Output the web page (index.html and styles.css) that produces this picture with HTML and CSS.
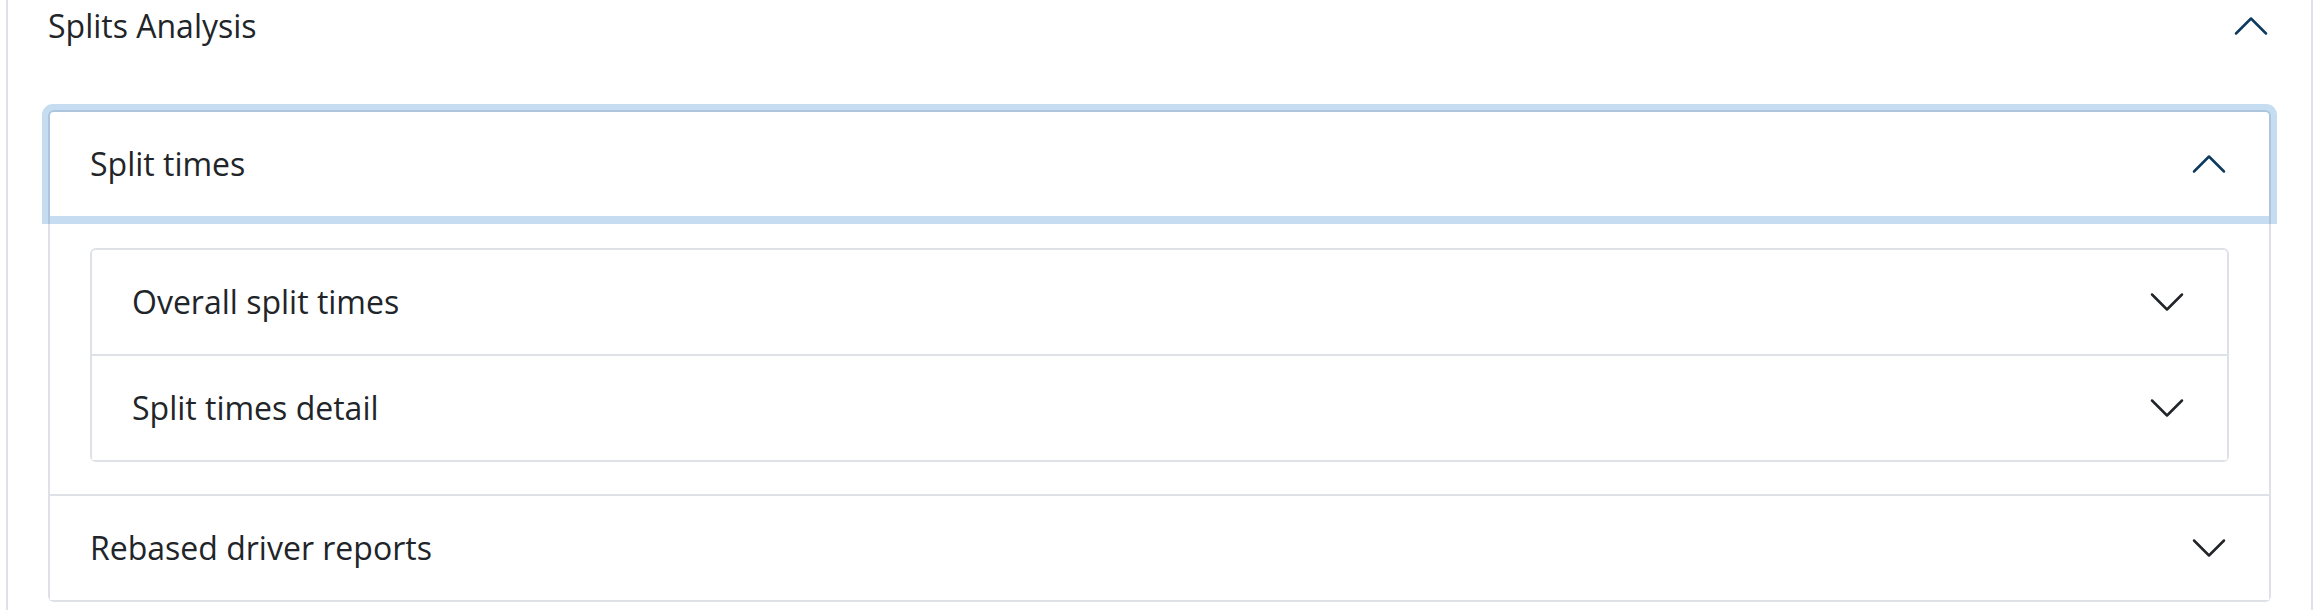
FILE: index.html
```html
<!DOCTYPE html>
<html lang="en">
<head>
<meta charset="utf-8">
<title>Splits Analysis</title>
<link rel="stylesheet" href="styles.css">
</head>
<body>
<div class="card">
  <div class="card-head">
    <span class="title">Splits Analysis</span>
    <svg class="chev chev-up" viewBox="0 0 16 16" aria-hidden="true"><path d="M2 11L8 5L14 11"/></svg>
  </div>
  <div class="card-body">
    <div class="acc">
      <div class="item">
        <button class="head is-open is-focus" type="button">
          <span class="title">Split times</span>
          <svg class="chev chev-up" viewBox="0 0 16 16" aria-hidden="true"><path d="M2 11L8 5L14 11"/></svg>
        </button>
        <div class="item-body">
          <div class="acc">
            <div class="item">
              <button class="head" type="button">
                <span class="title">Overall split times</span>
                <svg class="chev" viewBox="0 0 16 16" aria-hidden="true"><path d="M2 5L8 11L14 5"/></svg>
              </button>
            </div>
            <div class="item">
              <button class="head" type="button">
                <span class="title">Split times detail</span>
                <svg class="chev" viewBox="0 0 16 16" aria-hidden="true"><path d="M2 5L8 11L14 5"/></svg>
              </button>
            </div>
          </div>
        </div>
      </div>
      <div class="item">
        <button class="head" type="button">
          <span class="title">Rebased driver reports</span>
          <svg class="chev" viewBox="0 0 16 16" aria-hidden="true"><path d="M2 5L8 11L14 5"/></svg>
        </button>
      </div>
    </div>
  </div>
</div>
</body>
</html>
```
FILE: styles.css
```css
html, body {
  margin: 0;
  padding: 0;
  background: #ffffff;
}

body {
  font-family: "Open Sans", "Noto Sans", "Liberation Sans", sans-serif;
  font-size: 32px;
  line-height: 40px;
  color: #212529;
  overflow: hidden;
}

.card {
  margin: -28px 3px 0 6px;
  border: 2px solid #dee2e6;
  border-radius: 12px;
  background: #ffffff;
}

.card-head {
  display: flex;
  align-items: center;
  height: 104px;
  padding: 0 40px;
  box-sizing: border-box;
}

.card-body {
  padding: 32px 40px;
}

.acc {
  display: flex;
  flex-direction: column;
}

.item {
  border: 2px solid #dee2e6;
  background: #ffffff;
}

.item + .item {
  border-top: 0;
}

.item:first-child {
  border-top-left-radius: 6px;
  border-top-right-radius: 6px;
}

.item:last-child {
  border-bottom-left-radius: 6px;
  border-bottom-right-radius: 6px;
}

.head {
  display: flex;
  align-items: center;
  width: 100%;
  height: 104px;
  box-sizing: border-box;
  padding: 32px 40px;
  margin: 0;
  border: 0;
  background: #ffffff;
  font: inherit;
  color: #212529;
  text-align: left;
  cursor: pointer;
}

.item:first-child > .head {
  border-top-left-radius: 4px;
  border-top-right-radius: 4px;
}

.head.is-focus {
  position: relative;
  z-index: 3;
  box-shadow: 0 0 0 8px rgba(27, 115, 195, 0.25);
}

.head.is-open {
  border-bottom-left-radius: 0;
  border-bottom-right-radius: 0;
}

.item-body {
  padding: 32px 40px;
}

.title {
  white-space: nowrap;
}

.chev {
  flex-shrink: 0;
  width: 40px;
  height: 40px;
  margin-left: auto;
  fill: none;
  stroke: #212529;
  stroke-width: 1;
  stroke-linecap: round;
  stroke-linejoin: round;
}

.chev-up {
  stroke: #0d3a5e;
}
```
